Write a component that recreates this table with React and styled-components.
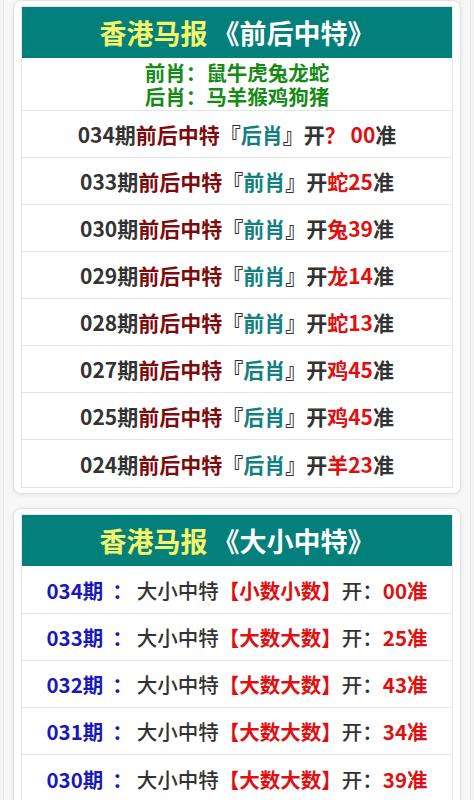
import React from "react";
import styled, { createGlobalStyle } from "styled-components";

const GlobalStyle = createGlobalStyle`
    *, *::before, *::after {
        box-sizing: border-box;
    }
    html, body {
        margin: 0;
        padding: 0;
        background-color: #f4f4f4;
        font-family: "Noto Sans CJK SC", "Noto Sans", sans-serif;
    }
`;

const qianhouList = [
    { issue: "034", pick: "后肖", result: "？", num: "00" },
    { issue: "033", pick: "前肖", result: "蛇", num: "25" },
    { issue: "030", pick: "前肖", result: "兔", num: "39" },
    { issue: "029", pick: "前肖", result: "龙", num: "14" },
    { issue: "028", pick: "前肖", result: "蛇", num: "13" },
    { issue: "027", pick: "后肖", result: "鸡", num: "45" },
    { issue: "025", pick: "后肖", result: "鸡", num: "45" },
    { issue: "024", pick: "后肖", result: "羊", num: "23" },
];

const daxiaoList = [
    { issue: "034", pick: "小数小数", num: "00" },
    { issue: "033", pick: "大数大数", num: "25" },
    { issue: "032", pick: "大数大数", num: "43" },
    { issue: "031", pick: "大数大数", num: "34" },
    { issue: "030", pick: "大数大数", num: "39" },
];

const App = () => {
    return (
        <PageContainer>
            <GlobalStyle />
            <Card>
                <Board>
                    <BoardHeader>
                        <Brand>香港马报</Brand>《前后中特》
                    </BoardHeader>
                    <ZodiacBox>
                        <ZodiacLine>前肖：鼠牛虎兔龙蛇</ZodiacLine>
                        <ZodiacLine>后肖：马羊猴鸡狗猪</ZodiacLine>
                    </ZodiacBox>
                    {qianhouList.map((item) => (
                        <Row key={item.issue} $height={47}>
                            <RowText>
                                {item.issue}期<DarkRed>前后中特</DarkRed>『
                                <Teal>{item.pick}</Teal>』开
                                <Red>
                                    {item.result}
                                    {item.result === "？" ? " " : ""}
                                    {item.num}
                                </Red>
                                准
                            </RowText>
                        </Row>
                    ))}
                </Board>
            </Card>

            <Card>
                <Board>
                    <BoardHeader>
                        <Brand>香港马报</Brand>《大小中特》
                    </BoardHeader>
                    {daxiaoList.map((item, index) => (
                        <Row key={item.issue} $height={index === 0 ? 48 : 47}>
                            <RowTextLight>
                                <Blue>
                                    {item.issue}期<Colon>：</Colon>
                                </Blue>
                                大小中特<Red>【{item.pick}】</Red>开：
                                <Red>{item.num}准</Red>
                            </RowTextLight>
                        </Row>
                    ))}
                </Board>
            </Card>
        </PageContainer>
    );
};

const PageContainer = styled.div`
    margin: 0 3px;
    padding: 0 9px;
    min-height: 800px;
    border-left: 1px solid #e9e9e9;
    border-right: 1px solid #e9e9e9;
    background-color: #f7f7f7;
    display: flex;
    flex-direction: column;
    gap: 14px;
`;

const Card = styled.div`
    background-color: #ffffff;
    border: 1px solid #e2e2e2;
    border-radius: 8px;
    padding: 5px 7px;
    box-shadow: 0 1px 4px #00000014;
`;

const Board = styled.div`
    border: 1px solid #e6e6e6;
    display: flex;
    flex-direction: column;
`;

const BoardHeader = styled.div`
    height: 51px;
    background-color: #03807b;
    color: #ffffff;
    font-size: 27px;
    font-weight: bold;
    display: flex;
    align-items: center;
    justify-content: center;
    white-space: nowrap;
`;

const Brand = styled.span`
    color: #f4f56a;
    margin-right: 5px;
`;

const ZodiacBox = styled.div`
    height: 53px;
    display: flex;
    flex-direction: column;
    align-items: center;
    justify-content: center;
    color: #168a17;
    font-size: 20.5px;
    font-weight: bold;
    border-bottom: 1px solid #e6e6e6;
`;

const ZodiacLine = styled.div`
    height: 24px;
    line-height: 24px;
    overflow: visible;
`;

const Row = styled.div`
    height: ${(props) => props.$height}px;
    display: flex;
    align-items: center;
    justify-content: center;
    border-bottom: 1px solid #e6e6e6;
    &:last-child {
        border-bottom: none;
    }
`;

const RowText = styled.div`
    font-size: 21px;
    font-weight: bold;
    color: #333333;
    white-space: nowrap;
`;

const RowTextLight = styled.div`
    font-size: 20.5px;
    font-weight: 500;
    color: #333333;
    white-space: nowrap;
`;

const DarkRed = styled.span`
    color: #7e0b0b;
`;

const Teal = styled.span`
    color: #138080;
`;

const Red = styled.span`
    color: #e01010;
    font-weight: bold;
`;

const Blue = styled.span`
    color: #1818bb;
    font-weight: bold;
`;

const Colon = styled.span`
    margin: 0 4px 0 9px;
`;

export default App;
